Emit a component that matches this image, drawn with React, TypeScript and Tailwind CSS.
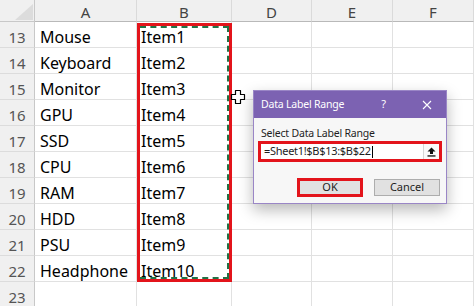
const rows: [number, string, string][] = [
  [13, 'Mouse', 'Item1'],
  [14, 'Keyboard', 'Item2'],
  [15, 'Monitor', 'Item3'],
  [16, 'GPU', 'Item4'],
  [17, 'SSD', 'Item5'],
  [18, 'CPU', 'Item6'],
  [19, 'RAM', 'Item7'],
  [20, 'HDD', 'Item8'],
  [21, 'PSU', 'Item9'],
  [22, 'Headphone', 'Item10'],
  [23, '', ''],
]

const cols = ['A', 'B', 'D', 'E', 'F']

function CrossCursor() {
  return (
    <svg width="16" height="16" viewBox="0 0 16 16" className="absolute left-[230px] top-[89px]">
      <path
        d="M5.5 1.5h5v4h4v5h-4v4h-5v-4h-4v-5h4z"
        fill="#fff"
        stroke="#000"
        strokeWidth="1.2"
        strokeLinejoin="round"
      />
    </svg>
  )
}

function DataLabelDialog() {
  return (
    <div className="absolute left-[253px] top-[90px] flex h-[114px] w-[194px] flex-col border border-[#9a86c6] bg-[#f7f7f7] font-['Noto_Sans',sans-serif] shadow-[0_6px_14px_rgba(0,0,0,0.28)]">
      <div className="flex h-[27px] items-center bg-[#7c62b2] pl-[7px] pr-[14px] text-white">
        <span className="text-[10.5px] tracking-[-0.2px]">Data Label Range</span>
        <span className="ml-auto mr-[36px] text-[11px]">?</span>
        <svg width="10" height="10" viewBox="0 0 10 10">
          <path d="M1 1l8 8M9 1l-8 8" stroke="#fff" strokeWidth="1.1" />
        </svg>
      </div>
      <div className="flex flex-1 flex-col px-[4px] pt-[8px]">
        <span className="pl-[3px] text-[10.5px] leading-[14px] tracking-[-0.2px] text-[#1e1e1e]">
          Select Data Label Range
        </span>
        <div className="mt-[1px] flex h-[21px] items-stretch border-[3px] border-[#e3141b] bg-white">
          <div className="flex flex-1 items-center pl-[3px] text-[11px] tracking-[-0.3px] text-[#1e1e1e]">
            =Sheet1!$B$13:$B$22
            <span className="ml-[1px] h-[12px] w-px bg-black" />
          </div>
          <div className="flex w-[16px] items-center justify-center border-l border-[#d6d6d6] bg-[#fafafa]">
            <svg width="9" height="10" viewBox="0 0 9 10">
              <path d="M4.5 0.5L8.5 4.5H6V7H3V4.5H0.5z" fill="#111" />
              <rect x="0.5" y="8.3" width="8" height="1.3" fill="#111" />
            </svg>
          </div>
        </div>
        <div className="mt-[16px] flex items-start pl-[39px]">
          <div className="border-[3px] border-[#e3141b]">
            <div className="flex h-[13px] w-[60px] items-center justify-center bg-[#e1e1e1] text-[11px] text-[#1e1e1e]">
              OK
            </div>
          </div>
          <div className="ml-[11px] mt-[1px] flex h-[17px] w-[66px] items-center justify-center border border-[#adadad] bg-[#e1e1e1] text-[11px] text-[#1e1e1e]">
            Cancel
          </div>
        </div>
      </div>
    </div>
  )
}

export default function App() {
  return (
    <div className="relative h-[306px] w-[474px] overflow-hidden bg-white font-['Noto_Sans',sans-serif]">
      <div className="grid grid-cols-[35px_102px_95px_80px_81px_81px] grid-rows-[22px_repeat(11,26px)]">
        <div className="relative border-b border-r border-[#c8c8c8] bg-[#f0f0f0]">
          <svg width="18" height="16" viewBox="0 0 18 16" className="absolute left-[15px] top-[4px]">
            <path d="M18 0V16H0z" fill="#dcdcdc" />
          </svg>
        </div>
        {cols.map((c) => (
          <div
            key={c}
            className="flex items-center justify-center border-b border-r border-b-[#b9b9b9] border-r-[#dadada] bg-[#f0f0f0] pt-[3px] text-[15px] text-[#444]"
          >
            {c}
          </div>
        ))}
        {rows.map(([n, a, b]) => (
          <div key={n} className="contents">
            <div className="flex items-end justify-center border-b border-r border-b-[#dcdcdc] border-r-[#c8c8c8] bg-[#f0f0f0] text-[15px] leading-[19px] text-[#555]">
              {n}
            </div>
            <div className="flex items-end border-b border-r border-[#e1e1e1] pl-[5px] text-[16px] leading-[19px] text-black">
              {a}
            </div>
            <div className="flex items-end border-b border-r border-[#e1e1e1] pl-[4px] text-[16px] leading-[19px] text-black">
              {b}
            </div>
            <div className="border-b border-r border-[#e1e1e1]" />
            <div className="border-b border-r border-[#e1e1e1]" />
            <div className="border-b border-r border-[#e1e1e1]" />
          </div>
        ))}
      </div>

      <div className="absolute left-[137px] top-[23px] h-[259px] w-[95px] border-[3px] border-[#e3141b]">
        <div className="h-full w-full border-b-2 border-r-2 border-t-2 border-dashed border-[#217346]" />
      </div>

      <CrossCursor />
      <DataLabelDialog />
    </div>
  )
}
